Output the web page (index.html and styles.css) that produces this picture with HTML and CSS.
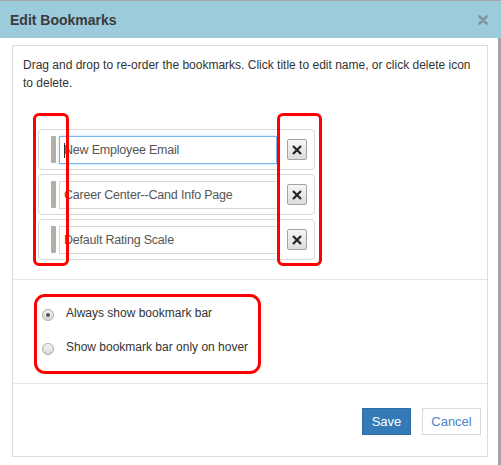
FILE: index.html
```html
<!DOCTYPE html>
<html>
<head>
<meta charset="utf-8">
<link rel="stylesheet" href="styles.css">
</head>
<body>
<div class="modal">
  <div class="header">
    <h1 class="title">Edit Bookmarks</h1>
    <svg class="close" width="10" height="10" viewBox="0 0 10 10"><path d="M1.5 1.5 L8.5 8.5 M8.5 1.5 L1.5 8.5" stroke="#7f959c" stroke-width="2.6" stroke-linecap="round"/></svg>
  </div>
  <div class="body">
    <div class="panel">
      <div class="section list-section">
        <p class="desc">Drag and drop to re-order the bookmarks. Click title to edit name, or click delete icon to delete.</p>
        <div class="rows">
          <div class="row">
            <span class="handle"></span>
            <div class="input focused"><span class="caret"></span>New Employee Email</div>
            <button class="del"><svg width="10" height="10" viewBox="0 0 10 10"><path d="M1 1 L9 9 M9 1 L1 9" stroke="#222" stroke-width="2.2"/></svg></button>
          </div>
          <div class="row">
            <span class="handle"></span>
            <div class="input">Career Center--Cand Info Page</div>
            <button class="del"><svg width="10" height="10" viewBox="0 0 10 10"><path d="M1 1 L9 9 M9 1 L1 9" stroke="#222" stroke-width="2.2"/></svg></button>
          </div>
          <div class="row">
            <span class="handle"></span>
            <div class="input">Default Rating Scale</div>
            <button class="del"><svg width="10" height="10" viewBox="0 0 10 10"><path d="M1 1 L9 9 M9 1 L1 9" stroke="#222" stroke-width="2.2"/></svg></button>
          </div>
        </div>
      </div>
      <div class="section radio-section">
        <label class="radio"><span class="dot checked"></span>Always show bookmark bar</label>
        <label class="radio"><span class="dot"></span>Show bookmark bar only on hover</label>
      </div>
      <div class="section footer">
        <button class="btn save">Save</button>
        <button class="btn cancel">Cancel</button>
      </div>
      <div class="mark mark-left"></div>
      <div class="mark mark-right"></div>
      <div class="mark mark-radio"></div>
    </div>
  </div>
</div>
</body>
</html>
```

FILE: styles.css
```css
html, body {
  margin: 0;
  padding: 0;
  background: #fff;
}
body {
  font-family: "Liberation Sans", Arial, sans-serif;
  color: #333;
  width: 501px;
  height: 465px;
  overflow: hidden;
}
.modal {
  width: 501px;
  height: 465px;
  display: flex;
  flex-direction: column;
}
.header {
  height: 37px;
  border-top: 1px solid #a4a4a4;
  background: #9ccbdc;
  display: flex;
  align-items: center;
  justify-content: space-between;
  padding: 0 13px 0 10px;
  flex: none;
}
.title {
  margin: 0;
  font-size: 14px;
  font-weight: bold;
  color: #3a3a3a;
}
.close {
  display: block;
  margin-top: 1px;
}
.body {
  flex: 1;
  padding: 7px 10px 8px 12px;
  border-right: 3px solid #a3a3a3;
}
.panel {
  position: relative;
  height: 412px;
  box-sizing: border-box;
  border: 1px solid #dcdcdc;
  display: flex;
  flex-direction: column;
}
.section + .section {
  border-top: 1px solid #e6e6e6;
}
.list-section {
  height: 233px;
  box-sizing: border-box;
  padding: 10px 10px 0 10px;
}
.desc {
  margin: 0;
  font-size: 12px;
  line-height: 18px;
  color: #333;
}
.rows {
  margin: 37px 0 0 15px;
  width: 277px;
  display: flex;
  flex-direction: column;
  gap: 4px;
}
.row {
  height: 41px;
  box-sizing: border-box;
  border: 1px solid #d9d9d9;
  border-radius: 4px;
  display: flex;
  align-items: center;
  padding: 0 7px 0 12px;
}
.handle {
  width: 5px;
  height: 27px;
  background: #b3aea6;
  border-radius: 1px;
  flex: none;
}
.input {
  margin-left: 3px;
  width: 218px;
  height: 28px;
  box-sizing: border-box;
  border: 1px solid #d6d6d6;
  border-right-color: #fff;
  font-size: 12.5px;
  letter-spacing: -0.2px;
  line-height: 26px;
  padding-left: 4px;
  color: #555;
  white-space: nowrap;
  overflow: hidden;
  position: relative;
}
.input.focused {
  border: 1px solid #78b6f0;
  box-shadow: 0 0 2px rgba(102, 175, 233, 0.6);
}
.caret {
  position: absolute;
  left: 4px;
  top: 6px;
  width: 1px;
  height: 15px;
  background: #333;
}
.del {
  margin-left: auto;
  width: 20px;
  height: 21px;
  padding: 0;
  border: 1px solid #a3a3a3;
  border-radius: 2px;
  background: linear-gradient(#f6f6f6, #dcdcdc);
  display: flex;
  align-items: center;
  justify-content: center;
}
.del svg {
  display: block;
}
.radio-section {
  height: 104px;
  box-sizing: border-box;
  padding: 24px 0 0 29px;
  display: flex;
  flex-direction: column;
  gap: 16px;
}
.radio {
  display: flex;
  align-items: center;
  font-size: 12px;
  line-height: 18px;
  color: #333;
}
.dot {
  width: 12px;
  height: 12px;
  box-sizing: border-box;
  border-radius: 50%;
  border: 1px solid #a9a9a9;
  background: linear-gradient(#f4f4f4, #d9d9d9);
  margin-right: 12px;
  margin-top: 3px;
  position: relative;
  flex: none;
}
.dot.checked::after {
  content: "";
  position: absolute;
  left: 3px;
  top: 3px;
  width: 4px;
  height: 4px;
  border-radius: 50%;
  background: #555;
}
.footer {
  flex: 1;
  display: flex;
  justify-content: flex-end;
  align-items: flex-start;
  padding: 24px 6px 0 0;
  gap: 11px;
}
.btn {
  height: 27px;
  box-sizing: border-box;
  font-family: "Liberation Sans", Arial, sans-serif;
  font-size: 13px;
  padding: 0;
  border-radius: 0;
}
.save {
  width: 49px;
  background: #337ab7;
  border: 1px solid #2e6da4;
  color: #fff;
}
.cancel {
  width: 59px;
  background: #fff;
  border: 1px solid #d9d9d9;
  color: #4a86c8;
}
.mark {
  position: absolute;
  border: 3px solid #f00;
  box-sizing: border-box;
}
.mark-left {
  left: 20px;
  top: 67px;
  width: 36px;
  height: 153px;
  border-radius: 6px;
}
.mark-right {
  left: 264px;
  top: 67px;
  width: 45px;
  height: 153px;
  border-radius: 6px;
}
.mark-radio {
  left: 21px;
  top: 248px;
  width: 227px;
  height: 80px;
  border-radius: 11px;
}
```
